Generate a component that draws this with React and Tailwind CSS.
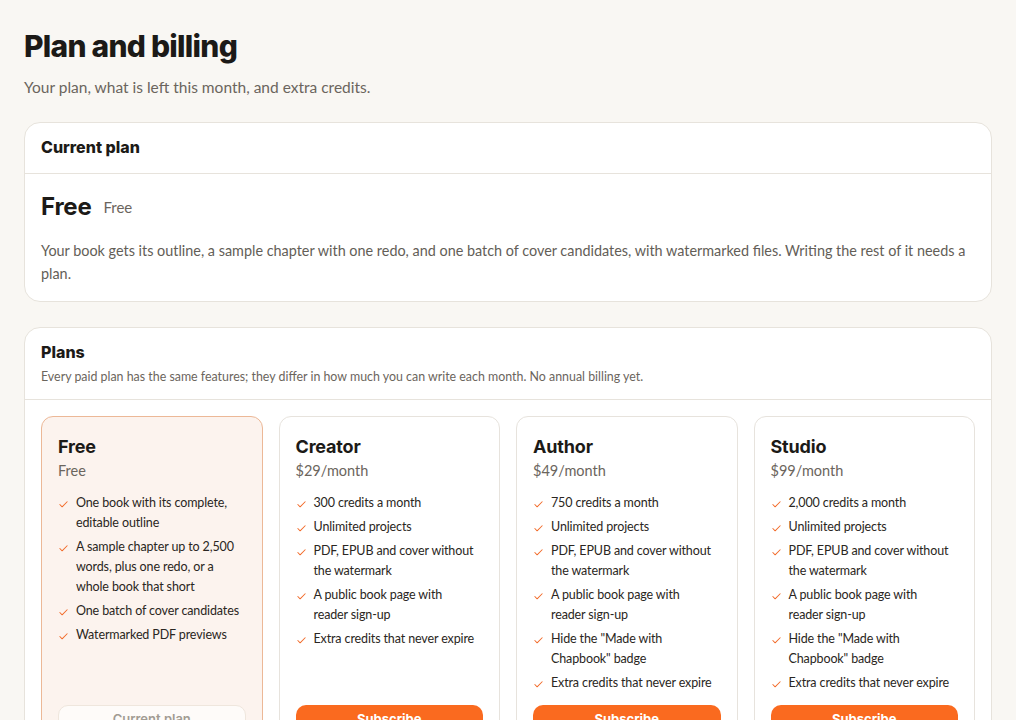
import React from "react";

const plans = [
  {
    name: "Free",
    price: "Free",
    current: true,
    features: [
      "One book with its complete, editable outline",
      "A sample chapter up to 2,500 words, plus one redo, or a whole book that short",
      "One batch of cover candidates",
      "Watermarked PDF previews",
    ],
  },
  {
    name: "Creator",
    price: "$29/month",
    features: [
      "300 credits a month",
      "Unlimited projects",
      "PDF, EPUB and cover without the watermark",
      "A public book page with reader sign-up",
      "Extra credits that never expire",
    ],
  },
  {
    name: "Author",
    price: "$49/month",
    features: [
      "750 credits a month",
      "Unlimited projects",
      "PDF, EPUB and cover without the watermark",
      "A public book page with reader sign-up",
      'Hide the "Made with Chapbook" badge',
      "Extra credits that never expire",
    ],
  },
  {
    name: "Studio",
    price: "$99/month",
    features: [
      "2,000 credits a month",
      "Unlimited projects",
      "PDF, EPUB and cover without the watermark",
      "A public book page with reader sign-up",
      'Hide the "Made with Chapbook" badge',
      "Extra credits that never expire",
    ],
  },
];

function CheckIcon() {
  return (
    <svg
      width="11"
      height="11"
      viewBox="0 0 24 24"
      fill="none"
      stroke="#f26b2a"
      strokeWidth="2.2"
      strokeLinecap="round"
      strokeLinejoin="round"
      className="shrink-0 mt-[6px]"
    >
      <path d="M20 6 9 17l-5-5" />
    </svg>
  );
}

function PlanCard({ plan }) {
  return (
    <div
      className={
        "flex flex-col rounded-xl border px-4 pt-[17px] pb-4 " +
        (plan.current
          ? "border-[#ecb897] bg-[#fcf3ee]"
          : "border-[#e7e3dd] bg-white")
      }
    >
      <div className="font-['Inter'] text-[18px] font-bold leading-[26px] tracking-[-0.01em] text-[#1c1a17]">
        {plan.name}
      </div>
      <div className="text-[14.5px] leading-[22px] text-[#6b655d]">{plan.price}</div>
      <ul className="mt-[11px] flex flex-col gap-1">
        {plan.features.map((f) => (
          <li key={f} className="flex items-start gap-[7px]">
            <CheckIcon />
            <span className="pr-1 text-[12.5px] leading-[20px] tracking-[-0.01em] text-[#2a2622]">
              {f}
            </span>
          </li>
        ))}
      </ul>
      <div className="mt-auto pt-[12px]">
        {plan.current ? (
          <button className="h-[30px] w-full rounded-[10px] border border-[#efe6dd] bg-[#fefbf9] font-['Inter'] text-[13px] font-semibold text-[#a29b93]">
            Current plan
          </button>
        ) : (
          <button className="h-[30px] w-full rounded-[10px] bg-[#fa6a1f] font-['Inter'] text-[13px] font-bold text-white">
            Subscribe
          </button>
        )}
      </div>
    </div>
  );
}

export default function App() {
  return (
    <div className="min-h-screen bg-[#f9f7f3] px-6 pt-7 pb-10 font-['Lato',sans-serif] text-[#1c1a17]">
      <h1 className="font-['Inter'] text-[30px] font-extrabold leading-9 tracking-[-0.025em] text-[#1c1a17]">
        Plan and billing
      </h1>
      <p className="mt-3 text-[15.5px] leading-[22px] text-[#6b655d]">
        Your plan, what is left this month, and extra credits.
      </p>

      <section className="mt-6 rounded-2xl border border-[#e7e3dc] bg-white">
        <div className="border-b border-[#e7e3dc] px-4 pt-[13px] pb-[15px]">
          <h2 className="font-['Inter'] text-[16px] font-extrabold leading-[22px]">
            Current plan
          </h2>
        </div>
        <div className="px-4 pt-[17px] pb-4">
          <div className="flex items-center gap-3">
            <span className="font-['Inter'] text-[24px] font-bold leading-8 tracking-[-0.01em]">
              Free
            </span>
            <span className="text-[15px] text-[#6b655d]">Free</span>
          </div>
          <p className="mt-4 text-[14.4px] leading-[23px] text-[#635e57]">
            Your book gets its outline, a sample chapter with one redo, and one batch of cover
            candidates, with watermarked files. Writing the rest of it needs a plan.
          </p>
        </div>
      </section>

      <section className="mt-[25px] rounded-2xl border border-[#e7e3dc] bg-white">
        <div className="border-b border-[#e7e3dc] px-4 pt-[13px] pb-[14px]">
          <h2 className="font-['Inter'] text-[16px] font-extrabold leading-[22px]">Plans</h2>
          <p className="mt-1.5 text-[12.4px] leading-4 text-[#6b655d]">
            Every paid plan has the same features; they differ in how much you can write each
            month. No annual billing yet.
          </p>
        </div>
        <div className="grid grid-cols-4 gap-4 p-4">
          {plans.map((p) => (
            <PlanCard key={p.name} plan={p} />
          ))}
        </div>
      </section>
    </div>
  );
}
